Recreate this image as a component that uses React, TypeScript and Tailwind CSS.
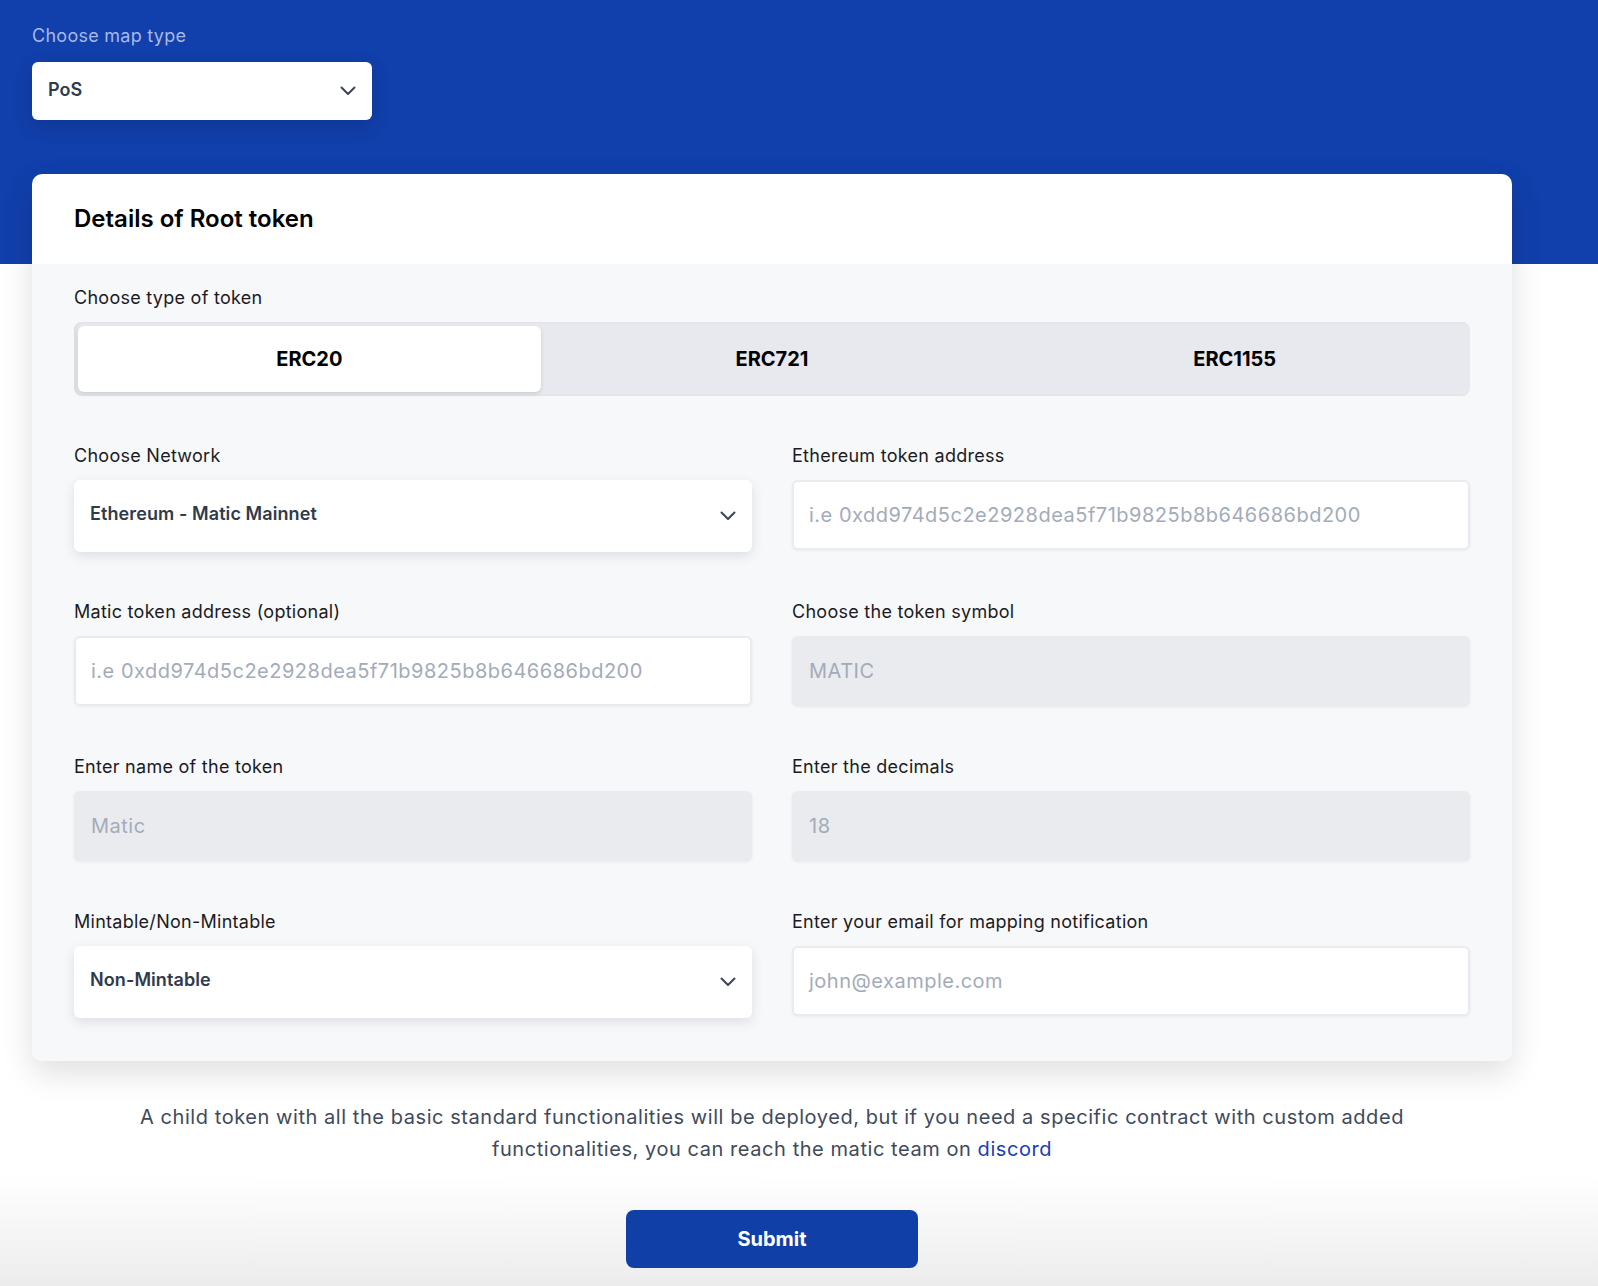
import React, { useState } from "react";

const Chevron = () => (
  <svg width="16" height="10" viewBox="0 0 16 10" fill="none" className="shrink-0">
    <polyline points="1.5,1.5 8,8 14.5,1.5" stroke="#3b4557" strokeWidth="2" strokeLinecap="round" strokeLinejoin="round" />
  </svg>
);

const Label = ({ children }: { children: React.ReactNode }) => (
  <div className="text-[18px] leading-[24px] tracking-[0.015em] text-[#1b1b1f] mb-[12px]">{children}</div>
);

const SelectBox = ({ value }: { value: string }) => (
  <div className="h-[72px] bg-white rounded-[6px] shadow-[0_4px_12px_rgba(30,40,60,0.12)] flex items-center justify-between pl-[16px] pr-[16px]">
    <span className="text-[18px] font-semibold tracking-[0.005em] text-[#2f3a4d] mb-[5px]">{value}</span>
    <Chevron />
  </div>
);

const TextInput = ({ placeholder, disabled }: { placeholder: string; disabled?: boolean }) => (
  <div
    className={
      disabled
        ? "h-[70px] my-[1px] rounded-[6px] bg-[#e9ebef] shadow-[0_1px_3px_rgba(30,40,60,0.08)] flex items-center px-[17px]"
        : "h-[70px] my-[1px] rounded-[6px] bg-white border-2 border-[#e9ebef] shadow-[0_1px_3px_rgba(30,40,60,0.06)] flex items-center px-[15px]"
    }
  >
    <span className="text-[20px] tracking-[0.025em] text-[#a3abba]">{placeholder}</span>
  </div>
);

export default function App() {
  const [tab, setTab] = useState("ERC20");
  const tabs = ["ERC20", "ERC721", "ERC1155"];

  return (
    <div
      className="min-h-screen px-[32px] pt-[24px] bg-[linear-gradient(to_bottom,#113fab_0px,#113fab_264px,#ffffff_264px,#ffffff_1175px,#ececec_1286px)]"
      style={{ fontFamily: "Inter, 'Noto Sans', sans-serif" }}
    >
      <div className="text-[18px] leading-[24px] tracking-[0.015em] text-[#a8b8e6]">Choose map type</div>
      <div className="mt-[14px] w-[340px] h-[58px] bg-white rounded-[6px] shadow-[0_6px_20px_rgba(0,0,0,0.15)] flex items-center justify-between pl-[16px] pr-[16px]">
        <span className="text-[18px] font-semibold text-[#2f3a4d] mb-[4px]">PoS</span>
        <Chevron />
      </div>

      <div className="mt-[54px] w-[1480px] rounded-[10px] overflow-hidden shadow-[0_12px_32px_rgba(0,0,0,0.13)]">
        <div className="h-[90px] bg-white flex items-center px-[42px]">
          <h2 className="text-[24px] font-semibold text-black">Details of Root token</h2>
        </div>
        <div className="bg-[#f7f8fa] px-[42px] pt-[22px] pb-[43px]">
          <div className="text-[18px] leading-[24px] tracking-[0.015em] text-[#1b1b1f]">Choose type of token</div>
          <div className="mt-[12px] h-[74px] rounded-[8px] bg-[#e8e9ee] p-[4px] flex shadow-[inset_2px_0_3px_rgba(0,0,0,0.06)]">
            {tabs.map((t) => (
              <button
                key={t}
                onClick={() => setTab(t)}
                className={
                  t === tab
                    ? "flex-1 rounded-[6px] bg-white shadow-[0_2px_4px_rgba(0,0,0,0.12)] text-[20px] font-bold text-black"
                    : "flex-1 rounded-[6px] text-[20px] font-bold text-black"
                }
              >
                {t}
              </button>
            ))}
          </div>

          <div className="mt-[48px] grid grid-cols-2 gap-x-[40px] gap-y-[48px]">
            <div>
              <Label>Choose Network</Label>
              <SelectBox value="Ethereum - Matic Mainnet" />
            </div>
            <div>
              <Label>Ethereum token address</Label>
              <TextInput placeholder="i.e 0xdd974d5c2e2928dea5f71b9825b8b646686bd200" />
            </div>
            <div>
              <Label>Matic token address (optional)</Label>
              <TextInput placeholder="i.e 0xdd974d5c2e2928dea5f71b9825b8b646686bd200" />
            </div>
            <div>
              <Label>Choose the token symbol</Label>
              <TextInput placeholder="MATIC" disabled />
            </div>
            <div>
              <Label>Enter name of the token</Label>
              <TextInput placeholder="Matic" disabled />
            </div>
            <div>
              <Label>Enter the decimals</Label>
              <TextInput placeholder="18" disabled />
            </div>
            <div>
              <Label>Mintable/Non-Mintable</Label>
              <SelectBox value="Non-Mintable" />
            </div>
            <div>
              <Label>Enter your email for mapping notification</Label>
              <TextInput placeholder="john@example.com" />
            </div>
          </div>
        </div>
      </div>

      <div className="w-[1480px] flex flex-col items-center">
        <p className="mt-[40px] text-center text-[20px] leading-[32px] tracking-[0.028em] text-[#3e4a5c]">
          A child token with all the basic standard functionalities will be deployed, but if you need a specific contract with custom added
          <br />
          functionalities, you can reach the matic team on <a className="text-[#1a40b0]">discord</a>
        </p>
        <button className="mt-[45px] w-[292px] h-[58px] rounded-[8px] bg-[#113fa8] text-white text-[20px] font-bold">
          Submit
        </button>
      </div>
    </div>
  );
}
